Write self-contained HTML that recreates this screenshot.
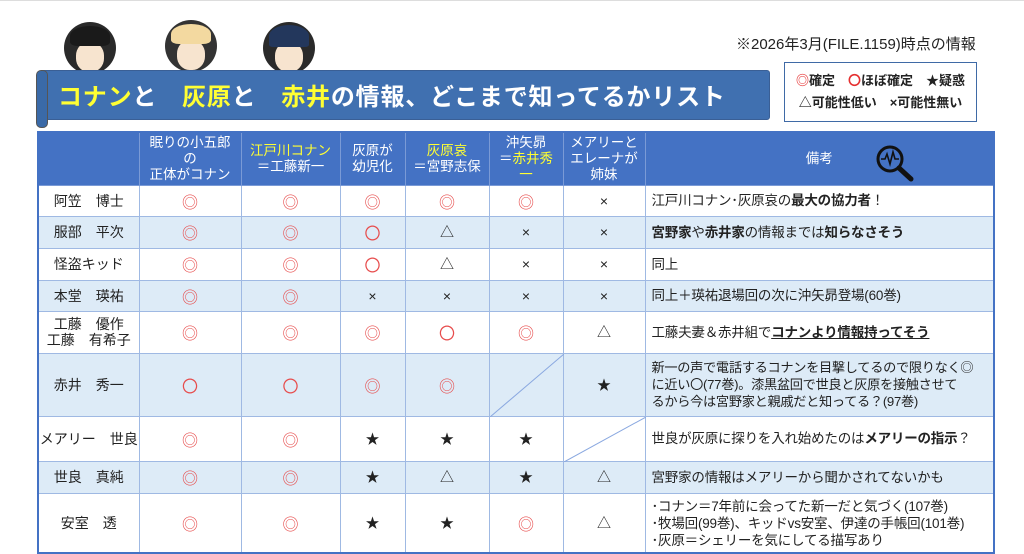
<!DOCTYPE html>
<html><head><meta charset="utf-8"><style>
body{margin:0;width:1024px;height:538px;overflow:hidden;background:#fff;font-family:"Liberation Sans","Noto Sans CJK JP",sans-serif;position:relative}
.topline{position:absolute;left:0;top:0;width:1024px;height:1px;background:#ddd}
.av{position:absolute;width:52px;height:52px;border-radius:50%;background:#2a2a2a;overflow:hidden}
.av .f{position:absolute;left:12px;top:20px;width:28px;height:30px;border-radius:45%;background:#f7e4cf}
.note{position:absolute;left:736px;top:33px;font-size:15px;color:#222}
.banner{position:absolute;left:40px;top:70px;width:728px;height:48px;background:#4070b0;border-radius:3px;border:1px solid #3a5f95}
.banner .t{position:absolute;left:17px;top:6px;font-size:24px;font-weight:bold;color:#fff;letter-spacing:0.8px}
.y{color:#ffff33}
.roll{position:absolute;left:36px;top:70px;width:10px;height:56px;background:#3a6aa8;border-radius:5px;border:1px solid #555}
.legend{position:absolute;left:784px;top:62px;width:193px;height:60px;border:1px solid #3f6aa6;font-size:13px;font-weight:bold;color:#222;line-height:22px;text-align:center;padding-top:7px;box-sizing:border-box;white-space:nowrap}
.r{color:#e53030}
table{position:absolute;left:37px;top:131px;border-collapse:collapse;table-layout:fixed;border:2px solid #4472c4}
td{border:1px solid #9fb9e3;font-size:14px;color:#222;text-align:center;padding:0;position:relative;white-space:nowrap}
thead td{background:#4472c4;color:#fff;line-height:16px;border-color:#7a9ad6;font-size:13.5px}
tr.z td{background:#ddebf7}
td.n{text-align:left;padding-left:6px;line-height:17px;white-space:nowrap;font-size:13.5px;letter-spacing:-0.2px}
.o{color:#e74c4c;font-size:16px}
tbody td{font-size:14px}
</style></head><body>
<div class="topline"></div>
<div class="av" style="left:64px;top:22px"><div class="f"></div><div style="position:absolute;left:6px;top:4px;width:40px;height:20px;background:#1a1a1a;border-radius:50% 50% 20% 20%"></div></div>
<div class="av" style="left:165px;top:20px;background:#333"><div class="f"></div><div style="position:absolute;left:6px;top:4px;width:40px;height:20px;background:#f3d9a0;border-radius:50% 50% 20% 20%"></div></div>
<div class="av" style="left:263px;top:22px"><div class="f"></div><div style="position:absolute;left:6px;top:3px;width:40px;height:22px;background:#23375c;border-radius:50% 50% 10% 10%"></div></div>
<div class="note">※2026年3月(FILE.1159)時点の情報</div>
<div class="banner"><div class="t"><span class="y">コナン</span>と　<span class="y">灰原</span>と　<span class="y">赤井</span>の情報、どこまで知ってるかリスト</div></div>
<div class="roll"></div>
<div class="legend"><span class="r">◎</span>確定　<span class="r">〇</span>ほぼ確定　★疑惑<br>△可能性低い　×可能性無い</div>
<table>
<colgroup><col style="width:101px"><col style="width:102px"><col style="width:99px"><col style="width:65px"><col style="width:84px"><col style="width:74px"><col style="width:82px"><col style="width:349px"></colgroup>
<thead><tr style="height:53px"><td></td><td>眠りの小五郎<br>の<br>正体がコナン</td><td><span class="y">江戸川コナン</span><br>＝工藤新一</td><td>灰原が<br>幼児化</td><td><span class="y">灰原哀</span><br>＝宮野志保</td><td>沖矢昴<br>＝<span class="y">赤井秀<br>一</span></td><td>メアリーと<br>エレーナが<br>姉妹</td><td>備考<svg style="position:absolute;left:228px;top:10px" width="46" height="40" viewBox="0 0 46 40"><circle cx="16" cy="16" r="12" fill="none" stroke="#111" stroke-width="3"/><path d="M25 25 L37 36" stroke="#111" stroke-width="5" stroke-linecap="round"/><path d="M7 16 H11 L13 11 L16 21 L19 9 L21 16 H25" fill="none" stroke="#111" stroke-width="1.6"/></svg></td></tr></thead>
<tbody>
<tr style="height:31px"><td>阿笠　博士</td><td class="o">◎</td><td class="o">◎</td><td class="o">◎</td><td class="o">◎</td><td class="o">◎</td><td>×</td><td class="n">江戸川コナン･灰原哀の<b>最大の協力者</b>！</td></tr>
<tr class="z" style="height:32px"><td>服部　平次</td><td class="o">◎</td><td class="o">◎</td><td class="o">〇</td><td>△</td><td>×</td><td>×</td><td class="n"><b>宮野家</b>や<b>赤井家</b>の情報までは<b>知らなさそう</b></td></tr>
<tr style="height:32px"><td>怪盗キッド</td><td class="o">◎</td><td class="o">◎</td><td class="o">〇</td><td>△</td><td>×</td><td>×</td><td class="n">同上</td></tr>
<tr class="z" style="height:31px"><td>本堂　瑛祐</td><td class="o">◎</td><td class="o">◎</td><td>×</td><td>×</td><td>×</td><td>×</td><td class="n">同上＋瑛祐退場回の次に沖矢昴登場(60巻)</td></tr>
<tr style="height:42px"><td style="line-height:16px">工藤　優作<br>工藤　有希子</td><td class="o">◎</td><td class="o">◎</td><td class="o">◎</td><td class="o">〇</td><td class="o">◎</td><td>△</td><td class="n">工藤夫妻＆赤井組で<b><u>コナンより情報持ってそう</u></b></td></tr>
<tr class="z" style="height:63px"><td>赤井　秀一</td><td class="o">〇</td><td class="o">〇</td><td class="o">◎</td><td class="o">◎</td><td><svg style="position:absolute;left:0;top:0" width="74" height="63"><line x1="0" y1="63" x2="74" y2="0" stroke="#8aa8e0"/></svg></td><td>★</td><td class="n" style="font-size:13.2px;letter-spacing:-0.3px">新一の声で電話するコナンを目撃してるので限りなく◎<br>に近い〇(77巻)。漆黒盆回で世良と灰原を接触させて<br>るから今は宮野家と親戚だと知ってる？(97巻)</td></tr>
<tr style="height:45px"><td>メアリー　世良</td><td class="o">◎</td><td class="o">◎</td><td>★</td><td>★</td><td>★</td><td><svg style="position:absolute;left:0;top:0" width="82" height="45"><line x1="0" y1="45" x2="82" y2="0" stroke="#8aa8e0"/></svg></td><td class="n">世良が灰原に探りを入れ始めたのは<b>メアリーの指示</b>？</td></tr>
<tr class="z" style="height:32px"><td>世良　真純</td><td class="o">◎</td><td class="o">◎</td><td>★</td><td>△</td><td>★</td><td>△</td><td class="n">宮野家の情報はメアリーから聞かされてないかも</td></tr>
<tr style="height:60px"><td>安室　透</td><td class="o">◎</td><td class="o">◎</td><td>★</td><td>★</td><td class="o">◎</td><td>△</td><td class="n" style="vertical-align:top;padding-top:4px">･コナン＝7年前に会ってた新一だと気づく(107巻)<br>･牧場回(99巻)、キッドvs安室、伊達の手帳回(101巻)<br>･灰原＝シェリーを気にしてる描写あり</td></tr>
</tbody></table>
</body></html>
